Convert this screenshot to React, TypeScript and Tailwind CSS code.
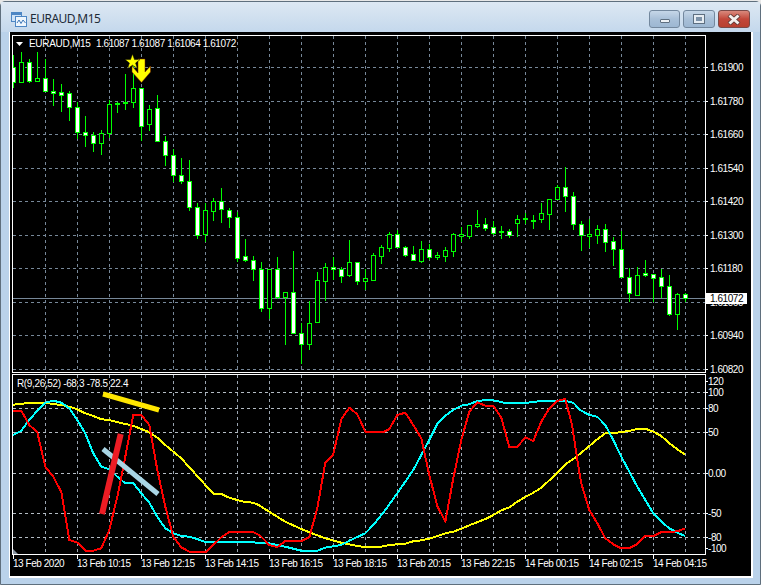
import React from "react";

type P = [number, number];
const merge = (groups: { ox: number; oy: number; pts: P[] }[]) => {
  const out: P[] = [];
  let last = -1;
  groups.forEach((g) =>
    g.pts.forEach(([zx, zy]) => {
      const X = g.ox + zx / 3;
      if (X > last) {
        out.push([X, g.oy + zy / 3]);
        last = X;
      }
    })
  );
  return out.map((p) => p[0].toFixed(1) + "," + p[1].toFixed(1)).join(" ");
};

const red = merge([
  { ox: 0, oy: 360, pts: [[38,152],[64,152],[88,195],[112,217],[136,320],[160,350],[184,396],[208,540],[232,548],[256,572],[280,572],[304,565],[328,510],[352,410],[376,290],[400,165],[424,165],[448,195],[472,330],[496,440],[520,530],[544,562],[568,575],[616,577],[640,555],[664,532],[688,516],[712,516],[760,516],[780,527]] },
  { ox: 240, oy: 375, pts: [[0,470],[40,470],[64,485],[88,510],[112,516],[136,498],[184,498],[208,487],[232,400],[256,263],[280,238],[304,133],[328,98],[352,118],[376,170],[432,170],[448,162],[472,120],[496,113],[520,150],[544,190],[568,300],[592,393],[616,440],[640,310],[664,195],[688,110],[712,82],[736,92],[760,92],[784,128],[808,216],[832,216],[856,187],[880,198],[904,140],[928,100],[952,78],[976,72],[996,150],[1020,305]] },
  { ox: 560, oy: 360, pts: [[20,118],[40,220],[64,370],[88,450],[112,490],[136,535],[160,553],[184,565],[208,565],[232,552],[256,528],[280,528],[304,516],[328,516],[352,514],[376,505]] },
]);
const cyan = merge([
  { ox: 0, oy: 360, pts: [[38,226],[64,212],[88,180],[112,152],[136,128],[160,122],[184,128],[208,145],[232,180],[256,220],[280,280],[304,320],[328,328],[352,350],[376,370],[400,370],[424,400],[448,428],[472,470],[496,505],[520,520],[544,528],[568,530],[592,537],[616,546],[760,547],[780,550]] },
  { ox: 240, oy: 375, pts: [[0,498],[40,503],[88,505],[112,510],[136,515],[184,527],[232,527],[256,518],[304,510],[328,497],[376,475],[400,450],[432,410],[472,355],[520,285],[544,240],[568,195],[592,147],[616,122],[640,105],[664,92],[688,88],[712,78],[748,74],[772,78],[796,84],[856,84],[904,78],[976,78],[1000,83],[1020,105]] },
  { ox: 560, oy: 360, pts: [[64,152],[88,165],[112,170],[136,195],[160,240],[184,290],[208,335],[232,380],[256,420],[280,460],[304,485],[328,505],[352,518],[376,528]] },
]);
const yellow = merge([
  { ox: 0, oy: 360, pts: [[38,134],[64,132],[88,128],[136,128],[160,132],[184,135],[208,140],[232,148],[256,160],[280,168],[304,178],[328,180],[352,186],[376,192],[400,197],[424,207],[448,217],[472,233],[496,255],[520,275],[544,295],[568,322],[592,348],[616,375],[640,401],[664,402],[688,413],[712,420],[736,426],[760,428],[780,437]] },
  { ox: 240, oy: 375, pts: [[0,378],[16,383],[40,385],[64,395],[88,410],[112,425],[136,440],[184,462],[208,472],[256,490],[304,503],[352,513],[376,516],[424,515],[448,510],[496,506],[520,499],[544,496],[568,491],[592,483],[616,475],[640,470],[664,461],[688,451],[736,432],[760,420],[784,406],[808,397],[832,380],[856,366],[880,353],[904,338],[928,316],[952,292],[976,268],[1000,252],[1020,236]] },
  { ox: 560, oy: 360, pts: [[16,310],[40,295],[64,278],[88,258],[112,238],[136,220],[160,220],[184,216],[208,213],[232,207],[256,206],[280,215],[304,228],[328,250],[352,268],[376,284]] },
]);

// [wickTop, wickBottom, bodyTop, bodyBottom, white]
type C = [number, number, number, number, number];
const g1: C[] = [[15,113,50,97,1],[5,100,35,97,0],[28,100,35,94,1],[6,95,85,94,0],[28,125,85,124,1],[88,168,124,130,1],[102,185,127,134,1],[123,212,130,172,1],[155,268,172,247,1],[198,290,247,256,1],[247,305,256,280,1],[240,315,250,280,0],[150,265,163,250,0],[155,188,160,163,0],[72,180,155,160,0],[25,173,115,155,0],[115,272,115,227,1],[165,242,178,223,0],[135,275,175,272,1],[258,347,272,316,1],[298,395,316,376,1],[323,403,376,394,1],[330,482,394,472,1]];
const g2: C[] = [[70,176,82,164,1],[70,185,91,161,0],[55,122,64,92,0],[25,128,62,88,1],[85,143,91,112,1],[95,245,112,235,1],[178,245,229,241,1],[228,302,241,268,1],[247,395,268,385,1],[267,418,268,385,0],[232,358,268,350,1],[335,494,335,350,0],[213,458,337,458,1],[430,552,458,493,1],[363,510,428,493,0],[277,428,301,425,0],[250,362,262,302,0],[232,300,262,268,1],[262,308,268,287,1],[180,292,247,284,0],[247,315,247,302,1],[268,330,295,302,0],[220,299,226,299,0],[196,252,202,227,0],[157,216,163,203,0],[150,205,163,200,1],[198,230,202,224,1],[198,244,223,241,1]];
const g4: C[] = [[273,338,298,332,0],[283,330,298,320,1],[307,330,316,320,0],[292,335,301,317,0],[250,320,253,302,0],[232,275,253,257,0],[226,267,226,257,0],[180,233,223,228,0],[205,243,223,233,1],[214,256,232,248,1],[228,267,244,245,0],[237,263,244,254,1],[196,260,208,218,0],[190,222,204,208,0],[195,237,210,211,0],[160,219,190,208,0],[148,240,148,191,0],[105,148,112,146,0],[52,185,112,139,1],[127,240,139,223,1],[214,302,223,256,1],[207,293,253,257,0],[226,282,238,254,0],[223,305,238,275,1],[262,347,274,298,1],[244,382,298,380,1],[355,455,382,430,1],[352,437,376,434,0],[331,380,370,376,1],[373,455,373,383,1],[358,445,382,409,1],[376,497,409,491,1],[430,539,433,491,0],[430,455,433,445,1]];

const conv = (g: C[], off: number): C[] => g.map((c) => [Math.round(off + c[0] / 3), Math.round(off + c[1] / 3), Math.round(off + c[2] / 3), Math.round(off + c[3] / 3), c[4]] as C);
const candles: C[] = [...conv(g1, 50), ...conv(g2, 180), ...conv(g4, 150)];

const vGrid = Array.from({ length: 21 }, (_, i) => 45 + 32 * i);
const upperH = [67, 101, 134, 168, 201, 235, 268, 302, 335, 369];
const lowerH = [392, 408, 432, 473, 513, 537];
const prices: [string, number][] = [["1.61900",67],["1.61780",101],["1.61660",134],["1.61540",168],["1.61420",201],["1.61300",235],["1.61180",268],["1.61060",302],["1.60940",335],["1.60820",369]];
const levels: [string, number][] = [["120",381],["100",392],["80",408],["50",432],["0.00",473],["-50",513],["-80",537],["-100",548]];
const times: [string, number][] = [["13 Feb 2020",13],["13 Feb 10:15",77],["13 Feb 12:15",141],["13 Feb 14:15",205],["13 Feb 16:15",269],["13 Feb 18:15",333],["13 Feb 20:15",397],["13 Feb 22:15",461],["14 Feb 00:15",525],["14 Feb 02:15",589],["14 Feb 04:15",653]];

function Chart() {
  return (
    <svg viewBox="10 32 741 544" width="741" height="544" className="block" style={{ fontFamily: '"Liberation Sans", Arial, sans-serif' }}>
      <defs>
        <clipPath id="up"><rect x="13" y="36" width="692" height="336" /></clipPath>
        <clipPath id="lo"><rect x="13" y="375" width="692" height="179" /></clipPath>
      </defs>
      <rect x="10" y="32" width="741" height="544" fill="#000" />
      <g shapeRendering="crispEdges" strokeWidth="1">
        {vGrid.map((x) => (
          <g key={x}>
            <line x1={x + 0.5} x2={x + 0.5} y1="36" y2="372" stroke={x === 517 ? "#ffffff" : "#778899"} strokeDasharray="3 3" />
            <line x1={x + 0.5} x2={x + 0.5} y1="375" y2="554" stroke={x === 517 ? "#ffffff" : "#9aa5b1"} strokeDasharray="3 3" />
          </g>
        ))}
        {upperH.map((y) => <line key={y} x1="13" x2="705" y1={y + 0.5} y2={y + 0.5} stroke="#778899" strokeDasharray="3 3" />)}
        {lowerH.map((y) => <line key={y} x1="13" x2="705" y1={y + 0.5} y2={y + 0.5} stroke="#b4bcc4" strokeDasharray="3 3" />)}
        <line x1="13" x2="705" y1="298.5" y2="298.5" stroke="#778899" />
      </g>
      <g clipPath="url(#up)" shapeRendering="crispEdges">
        {candles.map((c, i) => {
          const x = 13 + 8 * i;
          return (
            <g key={i}>
              <line x1={x + 0.5} x2={x + 0.5} y1={c[0]} y2={c[1]} stroke="#00ff00" />
              <rect x={x - 1.5} y={c[2] + 0.5} width="4" height={Math.max(1, c[3] - c[2])} fill={c[4] ? "#ffffff" : "#000000"} stroke="#00ff00" />
            </g>
          );
        })}
      </g>
      <path d="M138 59 H145 V72 L150.5 66 V72 L141.5 82.5 L132 72 V66 L138 73 Z" fill="#ffff00" stroke="#7a1a00" strokeWidth="0.5" />
      <path d="M132.5 54 L134.5 59.6 L140 59.6 L135.6 63 L137.4 68.5 L132.5 65.2 L127.6 68.5 L129.4 63 L125 59.6 L130.5 59.6 Z" fill="#ffff00" stroke="#000000" strokeWidth="0.5" />
      <g clipPath="url(#lo)" fill="none" strokeWidth="2" strokeLinejoin="round" shapeRendering="crispEdges">
        <polyline points={yellow} stroke="#ffff00" />
        <polyline points={cyan} stroke="#00ffff" />
        <polyline points={red} stroke="#ff0000" />
      </g>
      <path d="M13 549 L18 554 L13 554 Z" fill="#8a96a3" />
      <line x1="103" y1="394" x2="159" y2="410" stroke="#ffe600" strokeWidth="5" />
      <line x1="103" y1="449" x2="158" y2="494" stroke="#a9d6e5" strokeWidth="5" />
      <line x1="120.7" y1="434" x2="102" y2="514" stroke="#ed1c24" strokeWidth="6" />
      <g shapeRendering="crispEdges" stroke="#ffffff" fill="none">
        <rect x="12.5" y="35.5" width="693" height="337" />
        <rect x="12.5" y="374.5" width="693" height="180" />
        {prices.map(([, y]) => <line key={y} x1="705" x2="708" y1={y + 0.5} y2={y + 0.5} />)}
        {levels.map(([, y]) => <line key={y} x1="705" x2="708" y1={y + 0.5} y2={y + 0.5} />)}
        {times.map(([, x]) => <line key={x} x1={x + 0.5} x2={x + 0.5} y1="554" y2="559" />)}
      </g>
      <g fill="#ffffff" fontSize="10" letterSpacing="-0.45">
        <path d="M16 42 L23 42 L19.5 46 Z" />
        <text x="29" y="47" letterSpacing="-0.3">EURAUD,M15</text>
        <text x="96" y="47" letterSpacing="-0.42">1.61087 1.61087 1.61064 1.61072</text>
        <text x="17" y="387" letterSpacing="-0.35">R(9,26,52) -68.3 -78.5 22.4</text>
        {prices.map(([t, y]) => <text key={t} x="710" y={y + 4}>{t}</text>)}
        {levels.map(([t, y]) => <text key={t} x="708" y={y + 4}>{t}</text>)}
        {times.map(([t, x]) => <text key={t} x={x} y="567">{t}</text>)}
      </g>
      <rect x="706" y="293" width="41" height="11" fill="#ffffff" />
      <text x="710" y="302" fontSize="10" fill="#000000" letterSpacing="-0.45">1.61072</text>
    </svg>
  );
}

function WinIcon() {
  return (
    <svg width="16" height="15" viewBox="0 0 16 15" className="shrink-0">
      <rect x="0.5" y="0.5" width="10" height="9" fill="#cfe3f7" stroke="#4d86c4" />
      <rect x="0.5" y="0.5" width="10" height="2.5" fill="#4d86c4" />
      <rect x="4.5" y="4.5" width="11" height="10" fill="#eef6fd" stroke="#4d86c4" />
      <path d="M6 11 L8 8 L10 11.5 L12 8 L14.5 11" fill="none" stroke="#3f78b8" strokeWidth="1" />
    </svg>
  );
}

export default function App() {
  return (
    <div className="w-[761px] h-[585px] overflow-hidden bg-[#e8e8e8] pt-[1px]">
      <div className="w-full h-[584px] flex flex-col rounded-t-[5px] border border-[#5f6f7d] bg-[#bad2ea]">
        <div className="h-[30px] shrink-0 flex items-start bg-gradient-to-b from-[#dde8f3] to-[#c4d8ec] pl-[10px] pr-[10px]">
          <div className="flex items-center gap-[3px] h-full pt-[4px]">
            <WinIcon />
            <span className="text-[12px] leading-none tracking-[-0.5px] text-[#1d2b38]" style={{ fontFamily: '"Noto Sans", sans-serif' }}>EURAUD,M15</span>
          </div>
          <div className="ml-auto flex gap-[3px] mt-[8px]">
            <div className="w-[31px] h-[18px] rounded-[3px] border border-[#73889e] bg-gradient-to-b from-[#c6d7e8] via-[#a9c0d8] to-[#9db7d2] flex items-center justify-center">
              <div className="w-[10px] h-[4px] mt-[3px] bg-[#eef2f6] border border-[#5e6f80] rounded-[1px]" />
            </div>
            <div className="w-[32px] h-[18px] rounded-[3px] border border-[#73889e] bg-gradient-to-b from-[#c6d7e8] via-[#a9c0d8] to-[#9db7d2] flex items-center justify-center">
              <div className="w-[10px] h-[8px] border-2 border-[#e6ecf2] bg-[#7d92a8] outline outline-1 outline-[#5e6f80]" />
            </div>
            <div className="w-[32px] h-[18px] rounded-[3px] border border-[#7a4a48] bg-gradient-to-b from-[#d9897d] via-[#c2473a] to-[#b8402f] flex items-center justify-center">
              <svg width="14" height="11" viewBox="0 0 14 11">
                <path d="M2 1 L12 10 M12 1 L2 10" stroke="#5f3a36" strokeWidth="4.4" />
                <path d="M2.5 1.5 L11.5 9.5 M11.5 1.5 L2.5 9.5" stroke="#f4f0ee" strokeWidth="3" />
              </svg>
            </div>
          </div>
        </div>
        <div className="flex-1 min-h-0 pl-[8px] pr-[7px] pb-[6px]">
          <div className="h-[546px] w-fit border-l border-r-2 border-b-2 border-white bg-black">
            <Chart />
          </div>
        </div>
      </div>
    </div>
  );
}
